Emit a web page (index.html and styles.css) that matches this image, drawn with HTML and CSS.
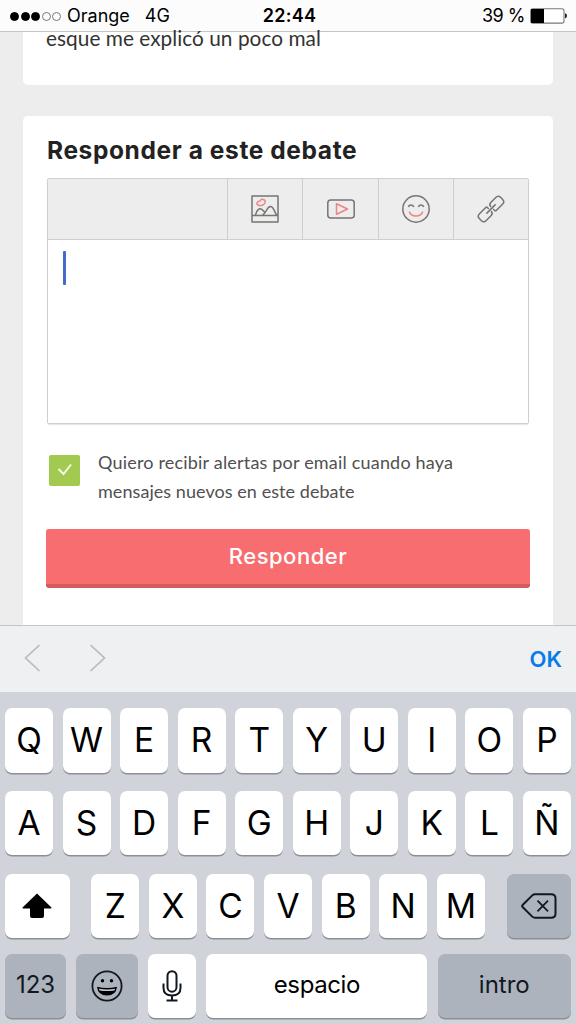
FILE: index.html
```html
<!DOCTYPE html>
<html lang="es">
<head>
<meta charset="utf-8">
<title>Responder a este debate</title>
<link rel="stylesheet" href="styles.css">
</head>
<body>
<div class="phone">
  <header class="status">
    <div class="carrier">
      <span class="signal"><i class="dot on"></i><i class="dot on"></i><i class="dot on"></i><i class="dot"></i><i class="dot"></i></span>
      <span class="operator">Orange</span><span class="network">4G</span>
    </div>
    <span class="time">22:44</span>
    <div class="power">
      <span class="percent">39 %</span>
      <svg class="battery" width="37" height="16" viewBox="0 0 37 16"><rect x=".7" y=".7" width="33.3" height="14.4" rx="2.2" fill="#fff" stroke="#777" stroke-width="1.1"/><path d="M1 1h13v14H1z"/><path d="M35 5.2q2 .4 2 2.6t-2 2.6z" fill="#222"/></svg>
    </div>
  </header>
  <main class="page">
    <section class="card post"><p class="post-text">esque me explicó un poco mal</p></section>
    <section class="card reply">
      <h2 class="title"><span class="title-text">Responder a este debate</span></h2>
      <div class="editor">
        <div class="toolbar">
          <span class="tool"><svg width="28" height="28" viewBox="0 0 28 28"><path d="M1 1h26v26H1zM1 20.500h26M4.500 20c1-5 4-7.500 6.500-5.500l3.500 3.500M11.500 20c4-1.500 4-8.500 8-8.500 3.500 0 3.500 5.500 6.500 9"/><path class="accent" d="M7 10C4.800 8.800 6.500 6 9 6 10.500 3 14.500 4.500 14.200 7.200c-.4 2.800-4.200 4.300-7.200 2.800z"/></svg></span>
          <span class="tool"><svg width="28" height="28" viewBox="0 0 28 28"><rect x=".8" y="5" width="26.400" height="18" rx="3"/><path class="accent" d="M9.500 8.700v10.600l11-5.300z"/></svg></span>
          <span class="tool"><svg width="28" height="28" viewBox="0 0 28 28"><circle cx="14" cy="14" r="13.200"/><path d="M6.500 12c.5-2.800 4.500-2.800 5.300 0M16.500 12c.5-2.800 4.500-2.800 5.300 0"/><path class="accent" d="M7.200 16.500c2 6 11.500 6 13.600 0"/></svg></span>
          <span class="tool"><svg width="28" height="28" viewBox="0 0 28 28"><g transform="rotate(-45 14 14)"><path d="M12.500 9.200H2.500Q-1 9.200-1 12.500v3Q-1 18.800 2.500 18.800h7q3 0 3-3.300M15.500 18.800h10q3.500 0 3.500-3.300v-3q0-3.300-3.500-3.300h-7q-3 0-3 3.300M7.500 14h13M12.500 9.200v3.300M15.500 15.500v3.300"/></g></svg></span>
        </div>
        <div class="input"><span class="caret"></span></div>
      </div>
      <div class="alerts">
        <span class="checkbox"><svg width="16" height="13" viewBox="0 0 16 13"><path d="M1.500 6l5 5L14 1.500"/></svg></span>
        <p class="alerts-text"><span class="line-a">Quiero recibir alertas por email cuando haya</span><br><span class="line-b">mensajes nuevos en este debate</span></p>
      </div>
      <div class="button"><span class="button-text">Responder</span></div>
    </section>
  </main>
  <div class="accessory">
    <svg width="82" height="28" viewBox="0 0 82 28"><path d="M15.500 1L1.500 14l14 13M66.500 1l14 13-14 13"/></svg>
    <span class="ok">OK</span>
  </div>
  <div class="keyboard">
    <div class="row"><span class="key">Q</span><span class="key">W</span><span class="key">E</span><span class="key">R</span><span class="key">T</span><span class="key">Y</span><span class="key">U</span><span class="key">I</span><span class="key">O</span><span class="key">P</span></div>
    <div class="row"><span class="key">A</span><span class="key">S</span><span class="key">D</span><span class="key">F</span><span class="key">G</span><span class="key">H</span><span class="key">J</span><span class="key">K</span><span class="key">L</span><span class="key">Ñ</span></div>
    <div class="row row-shift">
      <span class="key wide"><svg width="30" height="26" viewBox="0 0 30 26"><path d="M15 .5L29.500 14.500q.3 1-1 1H22V23q0 2-2 2H10q-2 0-2-2v-7.500H1.500q-1.300 0-1-1z"/></svg></span>
      <div class="letters"><span class="key">Z</span><span class="key">X</span><span class="key">C</span><span class="key">V</span><span class="key">B</span><span class="key">N</span><span class="key">M</span></div>
      <span class="key wide gray"><svg class="line" width="36" height="26" viewBox="0 0 36 26"><path d="M14 1.200h16q4.500 0 4.500 4.300v15q0 4.300-4.500 4.300H14q-1.500 0-2.700-1.200L1.800 14.200q-1.200-1.200 0-2.400l9.500-9.400Q12.500 1.200 14 1.200z"/><path stroke-width="1.800" d="M16.500 7.700l10.500 10.600M27 7.700L16.500 18.300"/></svg></span>
    </div>
    <div class="row row-space">
      <span class="key gray small num"><span class="num-text">123</span></span>
      <span class="key gray emoji"><svg width="32" height="32" viewBox="0 0 32 32"><circle cx="16" cy="16" r="14.600" fill="none" stroke="#111820" stroke-width="1.800"/><circle cx="11.500" cy="10.700" r="1.700"/><circle cx="20.500" cy="10.700" r="1.700"/><path d="M6 16.800q10 2.500 20 0-1 8.800-10 8.800T6 16.800z"/><path d="M7.800 18.700q8.200 1.500 16.400 0l-.8 1.700q-7.400 1.200-14.800 0z" fill="#c4c9d0"/></svg></span>
      <span class="key mic"><svg class="line" width="20" height="32" viewBox="0 0 20 32"><rect x="5.500" y="1.200" width="9" height="20.500" rx="4.500"/><path d="M1.500 13.500v4.500q0 7.500 8.500 7.500t8.500-7.500v-4.500M10 25.500v5M4.500 30.500h11"/></svg></span>
      <span class="key small space"><span class="space-text">espacio</span></span>
      <span class="key gray small enter"><span class="enter-text">intro</span></span>
    </div>
  </div>
</div>
</body>
</html>
```
FILE: styles.css
```css
* { box-sizing: border-box; }
body { margin: 0; }
p, h2 { margin: 0; }
svg { display: block; flex: none; }
.phone {
  width: 576px; height: 1024px; overflow: hidden;
  display: flex; flex-direction: column;
  background: #ededed; font-family: Inter, "Liberation Sans", sans-serif; color: #000;
}
.status {
  height: 32px; flex: none; display: grid; grid-template-columns: 1fr auto 1fr;
  align-items: center; padding: 1px 9px 0 10px;
  background: #fcfcfc; border-bottom: 1px solid #c4c4c4; font-size: 18px; line-height: 30px;
}
.carrier, .power { display: flex; align-items: center; }
.signal { display: flex; gap: 1.500px; margin-right: 6px; }
.dot { width: 9px; height: 9px; border-radius: 50%; border: 1px solid #777; }
.dot.on { background: #000; border-color: #000; }
.network { margin-left: 15px; }
.time { font-weight: 600; letter-spacing: 0.3px; padding-left: 2px; }
.power { justify-content: flex-end; }
.percent { margin-right: 5px; letter-spacing: -0.5px; }
.page { height: 593px; flex: none; padding: 0 23px; display: flex; flex-direction: column; gap: 31px; }
.card { background: #fff; flex: none; }
.post { height: 53px; border-radius: 0 0 5px 5px; padding-left: 23px; }
.post-text { margin-top: -4px; font: 20.8px/20px Lato, sans-serif; color: #333; white-space: nowrap; letter-spacing: 0.04px; }
.reply { height: 509px; border-radius: 5px 5px 0 0; padding: 16px 24px 0 23px; }
.title { height: 46px; margin-left: 1px; font-size: 24.5px; line-height: 37px; font-weight: 700; letter-spacing: 0.6px; color: #222; white-space: nowrap; }
.editor { height: 246px; margin-left: 1px; display: flex; flex-direction: column; border: 1px solid #cfcfcf; border-radius: 2px; box-shadow: 0 1px 1px #e4e4e4; }
.toolbar { height: 61px; display: flex; justify-content: flex-end; background: #ededed; border-bottom: 1px solid #cfcfcf; }
.tool { width: 75.2px; display: flex; align-items: center; justify-content: center; border-left: 1px solid #cfcfcf; }
.tool svg { fill: none; stroke: #777472; stroke-width: 1.5; stroke-linejoin: round; overflow: visible; }
.tool .accent { stroke: #f08383; }
.input { padding: 11px 15px; }
.caret { display: block; width: 3px; height: 34px; border-radius: 1px; background: #426bcb; }
.alerts { height: 105px; display: flex; padding: 24px 0 0 3px; }
.checkbox { width: 31px; height: 31px; margin-top: 7px; border-radius: 2px; display: flex; align-items: center; justify-content: center; background: #a3ca50; padding-bottom: 2px; }
.checkbox svg { fill: none; stroke: #f5fae9; stroke-width: 2; }
.alerts-text { margin-left: 18px; font: 18px/29px Lato, sans-serif; color: #505050; white-space: nowrap; }
.line-a { letter-spacing: 0.19px; }
.line-b { letter-spacing: 0.06px; }
.button { height: 59px; margin-right: -1px; border-radius: 3px; background: #f76d70; border-bottom: 4px solid #d35b60; color: #fff; font-size: 22px; line-height: 55px; font-weight: 500; text-align: center; letter-spacing: 0.5px; }
.accessory { height: 67px; flex: none; display: flex; align-items: center; justify-content: space-between; padding: 0 14px 2px 24px; background: #eff0f1; border-top: 1px solid #c5c5c5; }
.accessory svg { fill: none; stroke: #b8babc; stroke-width: 1.7; }
.ok { color: #087bea; font-size: 22px; font-weight: 600; padding-top: 2px; }
.keyboard { flex: 1; padding: 16px 5px 6px; background: #d0d4da; display: flex; flex-direction: column; gap: 18px; }
.row { height: 64.5px; flex: none; display: flex; justify-content: space-between; }
.letters { display: flex; gap: 9.6px; }
.row-shift { margin-top: 0.5px; }
.row-space { margin-top: -2.5px; }
.key { width: 48px; height: 64.5px; border-radius: 7px; display: flex; align-items: center; justify-content: center; background: #fff; box-shadow: 0 1.5px 0 #8b8f96; font-size: 33.5px; font-weight: 400; line-height: 64px; }
.wide { width: 64.5px; }
.gray { background: #acb3bc; color: #111820; }
.small { font-size: 24px; padding-bottom: 1px; }
.num { width: 61px; }
.emoji { width: 62px; }
.mic { width: 48px; }
.space { width: 221px; letter-spacing: -0.4px; }
.enter { width: 133.500px; }
.line { fill: none; stroke: #111820; stroke-width: 2; }
```
